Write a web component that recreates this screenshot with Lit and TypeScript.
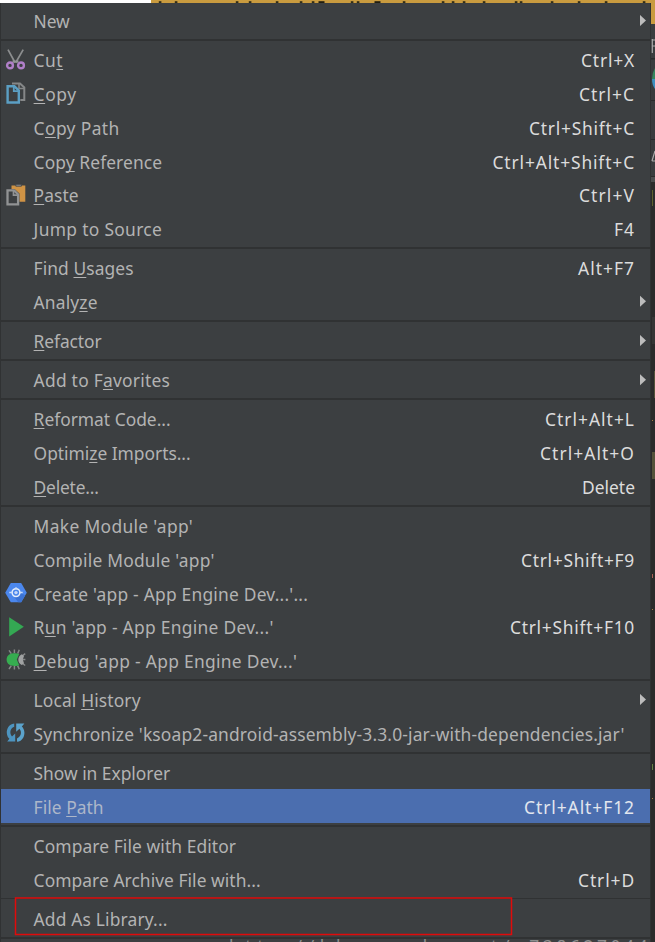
import { LitElement, html, css, svg, nothing } from "lit";
import { customElement, property } from "lit/decorators.js";

interface Item {
  label: string; // "_" precedes the mnemonic letter
  width: number; // label width
  keys?: string;
  keysWidth?: number;
  icon?: string;
  submenu?: boolean;
  selected?: boolean;
  boxed?: boolean;
}

const groups: Item[][] = [
  [{ label: "New", width: 36, submenu: true }],
  [
    { label: "Cu_t", width: 29.5, keys: "Ctrl+X", keysWidth: 54, icon: "cut" },
    { label: "_Copy", width: 43, keys: "Ctrl+C", keysWidth: 56, icon: "copy" },
    { label: "C_opy Path", width: 86, keys: "Ctrl+Shift+C", keysWidth: 106 },
    { label: "Cop_y Reference", width: 128.5, keys: "Ctrl+Alt+Shift+C", keysWidth: 142.5 },
    { label: "_Paste", width: 45, keys: "Ctrl+V", keysWidth: 56, icon: "paste" },
    { label: "Jump to Source", width: 128.5, keys: "F4", keysWidth: 21 },
  ],
  [
    { label: "Find _Usages", width: 100, keys: "Alt+F7", keysWidth: 57 },
    { label: "Analy_ze", width: 64, submenu: true },
  ],
  [{ label: "_Refactor", width: 68, submenu: true }],
  [{ label: "Add to F_avorites", width: 136.5, submenu: true }],
  [
    { label: "_Reformat Code...", width: 137, keys: "Ctrl+Alt+L", keysWidth: 90 },
    { label: "Optimi_ze Imports...", width: 157, keys: "Ctrl+Alt+O", keysWidth: 95 },
    { label: "_Delete...", width: 65, keys: "Delete", keysWidth: 53 },
  ],
  [
    { label: "Make Module 'app'", width: 159.5 },
    { label: "Compile Module 'app'", width: 181, keys: "Ctrl+Shift+F9", keysWidth: 114 },
    { label: "Create 'app - App Engine Dev...'...", width: 274.5, icon: "gae" },
    { label: "R_un 'app - App Engine Dev...'", width: 240, keys: "Ctrl+Shift+F10", keysWidth: 125, icon: "run" },
    { label: "_Debug 'app - App Engine Dev...'", width: 263.5, icon: "debug" },
  ],
  [
    { label: "Local _History", width: 107, submenu: true },
    { label: "Synchronize 'ksoap2-android-assembly-3.3.0-jar-with-dependencies.jar'", width: 591, icon: "sync" },
  ],
  [
    { label: "Show in Explorer", width: 136.5 },
    { label: "File _Path", width: 70, keys: "Ctrl+Alt+F12", keysWidth: 111, selected: true },
  ],
  [
    { label: "Compare File with Editor", width: 202.5 },
    { label: "Compare Archive File with...", width: 227, keys: "Ctrl+D", keysWidth: 57 },
  ],
  [{ label: "Add As Library...", width: 134, boxed: true }],
];

const icons: Record<string, unknown> = {
  cut: svg`<path d="M3 .6 10 13.5M18.2.6 10.8 13.5" stroke="#8c8e8f" stroke-width="1.7" fill="none"/>
    <path d="M7.5 12.6h6" stroke="#939596" stroke-width="2.2"/>
    <circle cx="5" cy="16.4" r="2.9" fill="none" stroke="#b07fc8" stroke-width="2.4"/>
    <circle cx="16" cy="16.4" r="2.9" fill="none" stroke="#b07fc8" stroke-width="2.4"/>`,
  copy: svg`<path d="M7 1.5h8l4.3 4V18h-4" fill="none" stroke="#858788" stroke-width="2"/>
    <path d="M14 1.5v5h5" fill="none" stroke="#858788" stroke-width="1.6"/>
    <path d="M2.6 4.3h6.8l4.4 4.2v12H2.6z" fill="#3c3f41" stroke="#5b9fc4" stroke-width="2.4"/>
    <path d="M8.8 4.5v4.6h4.7" fill="none" stroke="#5b9fc4" stroke-width="1.8"/>`,
  paste: svg`<path d="M6.5 1.6h13.8v16.2h-5.8V9.5L9.5 5h-3z" fill="#cf9345"/>
    <path d="M10.8.3h5.6v1.9h-5.6z" fill="#8d8f90" stroke="#3c3f41" stroke-width=".8"/>
    <path d="M2.5 6.4h6.6l4 4v10H2.5z" fill="#3c3f41" stroke="#919394" stroke-width="2.3"/>
    <path d="M8.5 6.6v4.5h4.7" fill="none" stroke="#919394" stroke-width="1.7"/>`,
  gae: svg`<path d="M5.8 1.1h10.4L21.8 10.7 16.2 20.3H5.8L.2 10.7z" fill="#4b87ed"/>
    <path d="M14 13l2.6-2 3.5 2.6-3.9 6.7h-3L9 14.5z" fill="#3c73d4"/>
    <circle cx="11" cy="10.6" r="3.9" fill="none" stroke="#e6eefb" stroke-width="1.5"/>
    <circle cx="11" cy="10.6" r="1.7" fill="#c6d9f8"/>
    <path d="M4.3 10.6h3M14.7 10.6h3M11 5.2v2" stroke="#cbdcf8" stroke-width="1.5"/>`,
  run: svg`<path d="M4.2 1.3 18.8 10.8 4.2 20.5z" fill="#34a853"/>`,
  debug: svg`<path d="M6.3 4.6 4 1.4M9.4 4V.4M12.6 4.6 14.3.8M6.3 16.6 4 20M9.4 17v3.6M12.6 16.6l1.7 3.7M16.5 7.5l3.7-2.8M17 10.6h3.4M16.5 13.7l3.7 2.8" stroke="#858787" stroke-width="1.5" fill="none"/>
    <path d="M14.2 5C10.6 3.6 1.6 3.4 1.6 10.6s9 7 12.6 5.6l-2.4-5.6z" fill="#36ad50"/>
    <path d="M16.8 5.2c-4.6 2.2-4.6 8.6 0 10.8l2.2-1.7-1.2-3.7 1.2-3.7z" fill="#a0a2a2"/>`,
  sync: svg`<path d="M9.2 1.4C3.6 2 1.6 7 1.8 11c.2 2.7 1.2 4.5 2.6 5.8L2.2 19.4h8v-8L7 14.4C4.4 11.6 4.8 6.4 9.2 4.8z" fill="#4d94bf"/>
    <path d="M12 19.8c5.6-.6 7.6-5.6 7.4-9.6-.2-2.7-1.2-4.5-2.6-5.8L19.4 1.6h-8.2v8.2l3.2-3c2.6 2.8 2 8-2.4 9.6z" fill="#5ba3cc"/>`,
};

@customElement("fit-text")
class FitText extends LitElement {
  @property() text = "";
  @property({ type: Number }) width = 0;

  static styles = css`
    :host { display: block; white-space: pre; }
    .mnemonic { text-decoration: underline; text-decoration-thickness: 1.3px; text-underline-offset: 2.2px; text-decoration-skip-ink: none; }
  `;

  private spacing() {
    const plain = this.text.replace("_", "");
    const ctx = document.createElement("canvas").getContext("2d")!;
    ctx.font = '17.4px "Noto Sans"';
    return (this.width - ctx.measureText(plain).width) / plain.length;
  }

  render() {
    const at = this.text.indexOf("_");
    const body = at < 0
      ? this.text
      : html`${this.text.slice(0, at)}<span class="mnemonic">${this.text[at + 1]}</span>${this.text.slice(at + 2)}`;
    return html`<span style="letter-spacing:${this.spacing().toFixed(3)}px">${body}</span>`;
  }
}

@customElement("app-root")
class AppRoot extends LitElement {
  static styles = css`
    :host {
      display: block;
      position: relative;
      width: 655px;
      height: 942px;
      overflow: hidden;
      background: #2b2b2b;
      font: 17.4px/33.75px "Noto Sans", "Open Sans", sans-serif;
      color: #b3b3b3;
    }
    .behind { position: absolute; inset: 0; width: 655px; height: 942px; }
    .menu {
      position: relative;
      box-sizing: border-box;
      width: 651px;
      height: 939px;
      margin-top: 3px;
      padding: .7px 1px 0 1px;
      background: #3c3f41;
      border-left: 1px solid #303233;
      border-right: 1px solid #303233;
    }
    .sep { height: 5.4px; display: flex; align-items: center; margin: 0 -1px; }
    .sep::before { content: ""; height: 1.6px; flex: 1; background: #303233; }
    .item {
      position: relative;
      display: flex;
      height: 33.75px;
      align-items: center;
      margin: 0 -1px;
      padding: 0 15px 0 4px;
    }
    .selected { background: #4b6eaf; color: #adb7c9; }
    .icon { width: 28.6px; height: 22px; flex: none; }
    .icon svg { display: block; overflow: visible; }
    .label, .keys { padding-top: 3.2px; }
    .label { flex: 1; }
    .keys { color: #dcdcdc; }
    .selected .keys { color: #e2e6ee; }
    .arrow {
      width: 6.5px; height: 12px; margin: 0 -11px 0 0;
      background: #bdbdbd;
      clip-path: polygon(0 0, 100% 50%, 0 100%);
    }
    .box {
      position: absolute;
      z-index: 1;
      left: 13px;
      top: -4px;
      width: 498px;
      height: 40px;
      overflow: visible;
    }
    .mark {
      position: absolute;
      left: 229px;
      top: 934px;
      display: flex;
      line-height: 24px;
      color: #8c8e8e;
    }
  `;

  private behind() {
    const specks = [160, 176, 237, 250, 277, 301, 313, 352, 358, 404, 443, 453, 464, 484, 516, 521, 552, 579, 606, 644];
    const wide = [320, 376];
    return html`<svg class="behind" viewBox="0 0 655 942">
      <path d="M0 0h151v3H0z" fill="#fff"/>
      <path d="M151 0h504v24h-4V3H151z" fill="#c99b3f"/>
      ${specks.map((x) => svg`<rect x=${x - 1.2} y="1.2" width="2.6" height="1.8" fill="#302c16"/>`)}
      ${wide.map((x) => svg`<rect x=${x - 1.5} y="1.2" width="6" height="1.8" fill="#211e10"/>`)}
      <path d="M651 24h4v152h-4z" fill="#393c3e"/>
      <path d="M651 58h4v1.5h-4zM651 100h4v1h-4zM651 139h4v1h-4z" fill="#292b2c"/>
      <path d="M652.3 39v14M652 40h3M652 46h3" stroke="#aaa" stroke-width="1.2"/>
      <path d="M655 68q-3 5-3 11h3z" fill="#35865e"/><path d="M652 79h3v10q-3-4-3-10z" fill="#3e8fc0"/>
      <path d="M652 161l3-10M652 161h3" stroke="#aaa" stroke-width="1.2"/>
      <path d="M651 177h4v5h-4z" fill="#4b4d4e"/>
      <path d="M652 190h1v16h-1z" fill="#5e602f"/>
      <path d="M652 317h3v27h-3z" fill="#353535"/>
      <path d="M654 371h1v27h-1zM652 452h3v27h-3z" fill="#54523a"/>
      <path d="M652 420h1v1h-1zM652 609h1v1h-1zM652 798h1v1h-1z" fill="#a87f45"/>
      <path d="M652 574h1v4h-1z" fill="#a65f55"/>
      <path d="M652 764h1v6h-1z" fill="#638044"/>
    </svg>`;
  }

  private item(i: Item) {
    return html`<div class="item ${i.selected ? "selected" : ""}">
      <div class="icon">${i.icon ? html`<svg width="21" height="22" viewBox="0 0 21 22">${icons[i.icon]}</svg>` : nothing}</div>
      <fit-text class="label" .text=${i.label} .width=${i.width}></fit-text>
      ${i.keys ? html`<fit-text class="keys" .text=${i.keys} .width=${i.keysWidth!}></fit-text>` : nothing}
      ${i.submenu ? html`<div class="arrow"></div>` : nothing}
      ${i.boxed
        ? html`<svg class="box" viewBox="0 0 498 40"><rect x="1.5" y="1" width="496" height="36.5" fill="none" stroke="#e00b0b" stroke-width="1.5"/></svg>`
        : nothing}
    </div>`;
  }

  render() {
    return html`${this.behind()}
      <div class="menu">
        ${groups.map((g, n) => html`${n ? html`<div class="sep"></div>` : nothing}${g.map((i) => this.item(i))}`)}
        <div class="sep"></div>
      </div>
      <div class="mark">
        <fit-text .text=${"http://blog.csdn.net/"} .width=${286}></fit-text>
        <fit-text .text=${"u738627044"} .width=${136}></fit-text>
      </div>`;
  }
}
